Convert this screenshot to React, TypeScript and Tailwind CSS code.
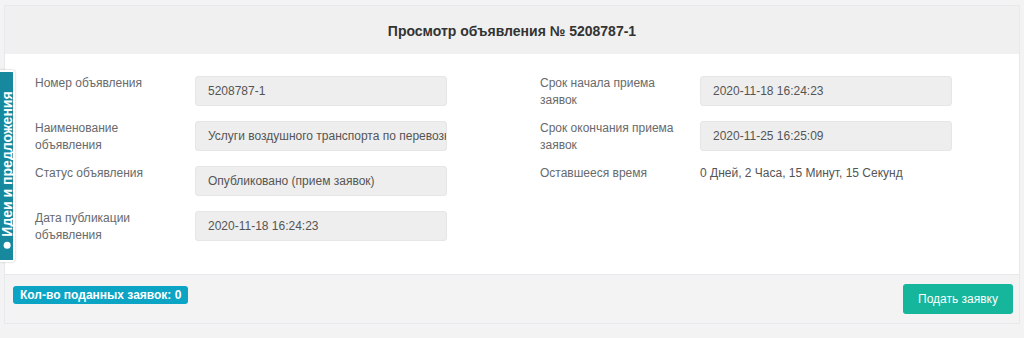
import { ReactNode } from 'react'

function Field({ label, children }: { label: ReactNode; children: ReactNode }) {
  return (
    <div className="flex items-start h-[30px] mb-[15px]">
      <div className="w-[175px] shrink-0 pl-[15px] pr-[10px] text-[12px] leading-[17px] text-[#676a6c] -mt-[1px]">
        {label}
      </div>
      {children}
    </div>
  )
}

function Box({ value }: { value: string }) {
  return (
    <div className="w-[252px] h-[30px] flex items-center px-[12px] bg-[#eeeeee] border border-[#e5e6e7] rounded-[3px] text-[12px] text-[#555] whitespace-nowrap overflow-hidden">
      {value}
    </div>
  )
}

export default function App() {
  return (
    <div
      className="relative w-[1024px] h-[338px] bg-[#f3f3f4] pt-[5px] px-[4px] overflow-hidden"
      style={{ fontFamily: '"Liberation Sans", Arial, sans-serif' }}
    >
      {/* боковая вкладка */}
      <div className="absolute left-0 top-[70px] w-[15px] h-[192px] bg-[#16899f] border-2 border-l-0 border-white rounded-r-[3px] shadow-[0_0_2px_rgba(0,0,0,0.3)] flex items-center justify-center z-10">
        <div className="-rotate-90 whitespace-nowrap text-white font-bold text-[14px] leading-none flex items-center gap-[5px] mt-[8px]">
          <span className="inline-block w-[7px] h-[7px] rounded-full bg-white" />
          Идеи и предложения
        </div>
      </div>

      <div className="w-[1016px] border border-[#e7eaec] bg-white">
        <div className="h-[48px] pt-[2px] bg-[#f0f0f0] flex items-center justify-center">
          <h1 className="text-[14px] font-bold text-[#333]">Просмотр объявления № 5208787-1</h1>
        </div>

        <div className="grid grid-cols-2 pt-[22px] pb-[18px] px-[15px] border-b border-[#e7eaec]">
          <div>
            <Field label="Номер объявления">
              <Box value="5208787-1" />
            </Field>
            <Field label={<>Наименование<br />объявления</>}>
              <Box value="Услуги воздушного транспорта по перевозке пассажиров" />
            </Field>
            <Field label="Статус объявления">
              <Box value="Опубликовано (прием заявок)" />
            </Field>
            <Field label={<>Дата публикации<br />объявления</>}>
              <Box value="2020-11-18 16:24:23" />
            </Field>
          </div>
          <div className="pl-[13px]">
            <Field label={<>Срок начала приема<br />заявок</>}>
              <Box value="2020-11-18 16:24:23" />
            </Field>
            <Field label={<>Срок окончания приема<br />заявок</>}>
              <Box value="2020-11-25 16:25:09" />
            </Field>
            <Field label="Оставшееся время">
              <div className="text-[12px] leading-[17px] -mt-[1px] text-[#555]">
                0 Дней, 2 Часа, 15 Минут, 15 Секунд
              </div>
            </Field>
          </div>
        </div>

        <div className="bg-[#f3f3f3] flex items-start justify-between pl-[8px] pr-[6px] py-[9px]">
          <span className="mt-[2px] h-[18px] px-[7px] flex items-center rounded-[3px] bg-[#0ba4c4] text-white text-[12px] font-bold">
            Кол-во поданных заявок: 0
          </span>
          <button className="h-[30px] px-[15px] rounded-[3px] bg-[#15b69b] text-white text-[12px]">
            Подать заявку
          </button>
        </div>
      </div>
    </div>
  )
}
